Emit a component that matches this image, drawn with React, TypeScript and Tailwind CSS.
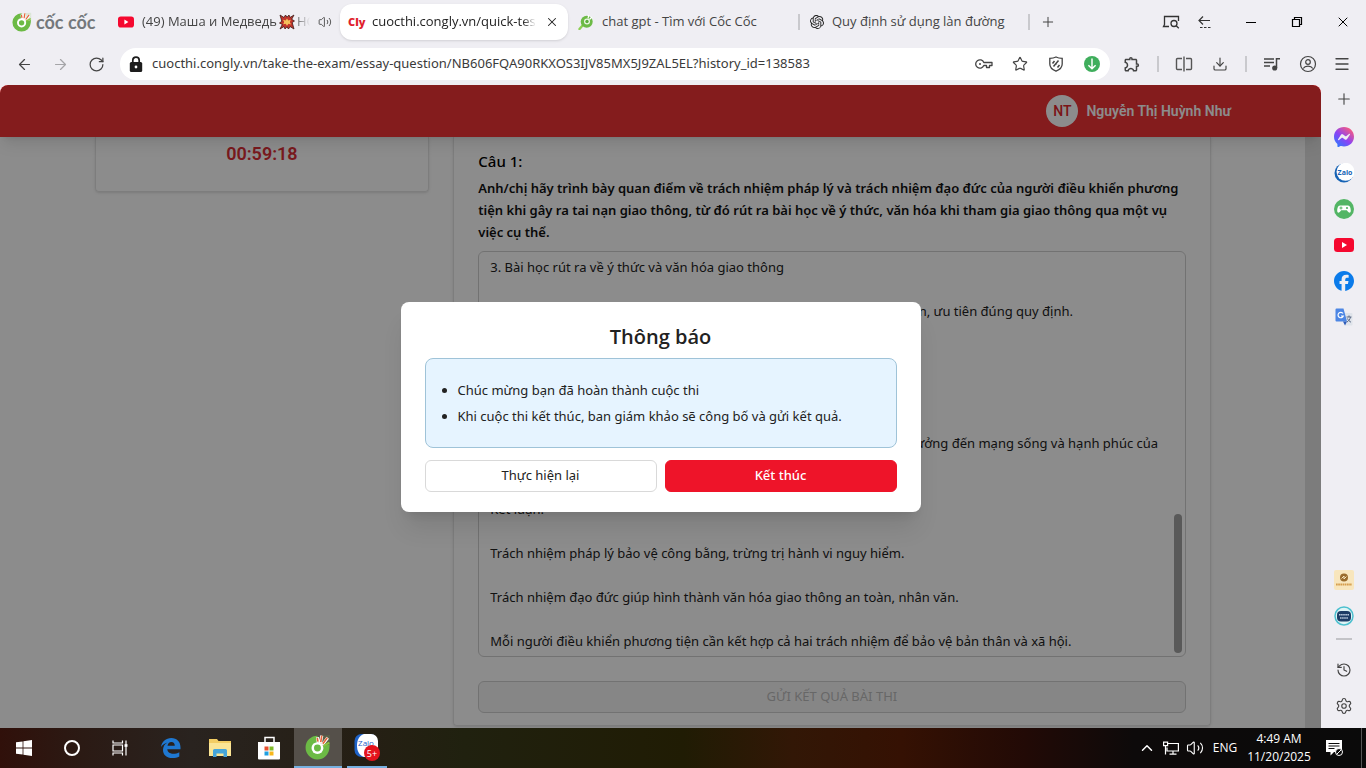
import React from 'react';
import { ArrowLeft, ArrowRight, ChevronUp, Download, History, Menu, Plus, RotateCw, Settings, Star, Volume2, X } from 'lucide-react';
import { MdOutlineExtension } from 'react-icons/md';
import { SiOpenai, SiFacebook, SiMessenger } from 'react-icons/si';

const ANSWER = [
  '3. Bài học rút ra về ý thức và văn hóa giao thông',
  '',
  'Luôn chấp hành tín hiệu đèn, biển báo, chạy đúng tốc độ và đi đúng làn, ưu tiên đúng quy định.',
  '',
  'Không sử dụng rượu bia, điện thoại khi lái xe.',
  '',
  'Biết nhường nhịn, giúp đỡ người gặp nạn.',
  '',
  'Mỗi hành vi nhỏ khi tham gia giao thông đều luôn có thể gây ra ảnh hưởng đến mạng sống và hạnh phúc của',
  'nhiều gia đình.',
  '',
  'Kết luận:',
  '',
  'Trách nhiệm pháp lý bảo vệ công bằng, trừng trị hành vi nguy hiểm.',
  '',
  'Trách nhiệm đạo đức giúp hình thành văn hóa giao thông an toàn, nhân văn.',
  '',
  'Mỗi người điều khiển phương tiện cần kết hợp cả hai trách nhiệm để bảo vệ bản thân và xã hội.',
].join('\n');

interface IconProps {
  className?: string;
}

const CocCocIcon: React.FC<IconProps> = ({ className }) => (
  <svg viewBox="0 0 24 24" className={className} aria-hidden="true">
    <path d="M11.500 1.500A11 11 0 1 0 22.500 13L22.800 9.500 12 12z" fill="#6cba45" />
    <path d="M12 12 12.500 1.500 23 1v9z" fill="#6cba45" fillOpacity=".15" />
    <circle cx="11.500" cy="13" r="5.500" fill="#fff" />
    <circle cx="11.500" cy="13" r="3.200" fill="#6cba45" />
    <path d="M12.300 8 11.500 3M14.200 8.500 15.500 1.500M16 10 21 3.500" stroke="#fff" strokeWidth="2.800" />
    <path d="M12 7 11.300 3.500M14.500 7.500 15.500 1.500M16.500 9 20.500 3.500" stroke="#e4643c" strokeWidth="1.500" />
    <path d="M17 11 22.500 8" stroke="#8ac43f" strokeWidth="1.800" />
  </svg>
);

const CocCocSearchIcon: React.FC<IconProps> = ({ className }) => (
  <svg viewBox="0 0 16 16" className={className} aria-hidden="true">
    <path d="M1.500 15 5 11" stroke="#8ccf52" strokeWidth="2.400" strokeLinecap="round" />
    <circle cx="8.700" cy="7.700" r="6" fill="#6cba45" />
    <circle cx="9" cy="7.500" r="3" fill="#eaf6e2" />
    <circle cx="9" cy="7.500" r="1.700" fill="#5cae3a" />
    <path d="M10 4.500 10.800 1.200M11.500 5.500 14 2.800" stroke="#fff" strokeWidth="1.200" />
  </svg>
);

const YoutubeIcon: React.FC<IconProps> = ({ className }) => (
  <svg viewBox="0 0 20 14" className={className} aria-hidden="true">
    <rect width="20" height="14" rx="3.500" fill="#f5082f" />
    <path d="M8 4v6l5-3z" fill="#fff" />
  </svg>
);

const BoomIcon: React.FC<IconProps> = ({ className }) => (
  <svg viewBox="0 0 16 16" className={className} aria-hidden="true">
    <path
      d="M1 1l4 2.500L6.500 1 8 3.200 10 1l1 2.500L15 1l-2.300 4.300L15.500 7l-2.300 1.500L15 15l-4-2.500L9.500 15 8 12.800 6 15l-1-2.500L1 15l2.300-4.500L.5 9l2.300-1.700z"
      fill="#c3352c"
      stroke="#3c1a16"
      strokeWidth=".8"
    />
    <path d="M8 4.500l1.300 2 2.500-.7-1 2.300 1.200 2.300-2.600-.6L8 11.700l-1.300-2-2.500.6 1-2.300L4 5.800l2.600.7z" fill="#f5c35c" />
  </svg>
);

const LockIcon: React.FC<IconProps> = ({ className }) => (
  <svg viewBox="0 0 14 16" className={className} aria-hidden="true">
    <rect x=".8" y="6" width="12.400" height="10" rx="1.500" fill="#1d1d1d" />
    <path d="M3.800 7V4.300a3.200 3.200 0 0 1 6.400 0V7" fill="none" stroke="#1d1d1d" strokeWidth="1.700" />
    <circle cx="7" cy="11" r="1.400" fill="#fff" />
  </svg>
);

const KeyIcon: React.FC<IconProps> = ({ className }) => (
  <svg viewBox="0 0 18 10" className={className} fill="none" stroke="#444" strokeWidth="1.300" aria-hidden="true">
    <path d="M8.800 3.500A4.200 4.200 0 1 0 8.800 6.500H11.500V8.500H14.500V6.500H17V3.500z" strokeLinejoin="round" />
    <circle cx="5" cy="5" r="1" fill="#444" stroke="none" />
  </svg>
);

const AccountIcon: React.FC<IconProps> = ({ className }) => (
  <svg viewBox="0 0 18 18" className={className} fill="none" stroke="#444" strokeWidth="1.200" aria-hidden="true">
    <circle cx="9" cy="9" r="7.500" />
    <circle cx="9" cy="7" r="2.300" />
    <path d="M4.200 13.500c1-1.700 2.800-2.300 4.800-2.300s3.800.6 4.800 2.300" />
  </svg>
);

const ScreenSearchIcon: React.FC<IconProps> = ({ className }) => (
  <svg viewBox="0 0 18 14" className={className} fill="none" stroke="#333" strokeWidth="1.300" aria-hidden="true">
    <path d="M7 11.500H1.500L2.500 9.500V1.500H16.500V6" />
    <circle cx="12" cy="8.500" r="3" />
    <path d="m14.200 10.700 2.600 2.500" />
  </svg>
);

const BackDashIcon: React.FC<IconProps> = ({ className }) => (
  <svg viewBox="0 0 16 14" className={className} fill="none" stroke="#333" strokeWidth="1.200" aria-hidden="true">
    <path d="M13 5.500H2M6 1.500 2 5.500l4 4" />
    <path d="M3 12.500h12" strokeDasharray="2.500 1.500" />
  </svg>
);

const RestoreIcon: React.FC<IconProps> = ({ className }) => (
  <svg viewBox="0 0 12 12" className={className} fill="none" stroke="#000" strokeWidth="1.200" aria-hidden="true">
    <path d="M1.500 3.500h7v7h-7zM3.500 3.500v-2h7v7h-2" />
  </svg>
);

const ShieldIcon: React.FC<IconProps> = ({ className }) => (
  <svg viewBox="0 0 16 16" className={className} fill="none" stroke="#444" strokeWidth="1.300" aria-hidden="true">
    <path d="M8 1C6 2 4 2.300 1.800 2.300V8c0 3.300 2.700 5.800 6.200 7.200 3.500-1.400 6.200-3.900 6.200-7.200V2.300C12 2.300 10 2 8 1z" />
    <path d="M4.500 7.500 6.500 5M5.500 10.500l5-6M8 7l.5 1.500M9.500 11.500 11.500 9" strokeWidth="1.500" />
  </svg>
);

const SplitIcon: React.FC<IconProps> = ({ className }) => (
  <svg viewBox="0 0 18 16" className={className} fill="none" stroke="#555" strokeWidth="1.400" aria-hidden="true">
    <path d="M7 2.500H2.500a1 1 0 0 0-1 1v9a1 1 0 0 0 1 1H7M11 2.500h4.500a1 1 0 0 1 1 1v9a1 1 0 0 1-1 1H11M9 .5v15" />
  </svg>
);

const PlaylistIcon: React.FC<IconProps> = ({ className }) => (
  <svg viewBox="0 0 18 16" className={className} fill="none" stroke="#444" strokeWidth="1.500" aria-hidden="true">
    <path d="M1 3h10M1 6.500h10M1 10h6M13.500 12V2.800H17" />
    <circle cx="11.700" cy="12" r="1.800" fill="#444" />
  </svg>
);

const ZaloIcon: React.FC<IconProps> = ({ className }) => (
  <svg viewBox="0 0 20 20" className={className} aria-hidden="true">
    <circle cx="10" cy="10" r="9.500" fill="#1763b5" />
    <circle cx="11.500" cy="8.800" r="9" fill="#fff" />
    <text x="11" y="12" textAnchor="middle" fontSize="7" fontWeight="700" fontFamily="Open Sans, sans-serif" fill="#1763b5">
      Zalo
    </text>
  </svg>
);

const GameIcon: React.FC<IconProps> = ({ className }) => (
  <svg viewBox="0 0 20 20" className={className} aria-hidden="true">
    <circle cx="10" cy="10" r="10" fill="#53b565" />
    <path d="M6 6.500h8c2 0 2.800 3 2.800 5.300 0 2.200-1.900 2.400-3 .8l-1-1.300H7.200l-1 1.300c-1.100 1.600-3 1.400-3-.8C3.200 9.500 4 6.500 6 6.500z" fill="#fff" />
    <path d="M7 7.500v3M5.500 9h3" stroke="#53b565" />
    <circle cx="13" cy="9" r="1.100" fill="#53b565" />
  </svg>
);

const TranslateIcon: React.FC<IconProps> = ({ className }) => (
  <svg viewBox="0 0 18 18" className={className} aria-hidden="true">
    <path d="M8 5h8.500a1 1 0 0 1 1 1v10.500a1 1 0 0 1-1 1H10z" fill="#dfe3ea" />
    <path d="M1.500.5h7L12 13.500H1.500a1 1 0 0 1-1-1v-11a1 1 0 0 1 1-1z" fill="#4d86e4" />
    <path d="M8 5.500A2.700 2.700 0 1 0 8.300 8H6" fill="none" stroke="#fff" strokeWidth="1.200" />
    <path d="M11.500 9h5M14 7.500V9M15.500 9c-.5 2.500-2 4-3.500 5M12.500 10.500c.5 1.500 2 3 3.500 3.700" fill="none" stroke="#5c6b86" />
    <path d="m10 17.500 2-4H8z" fill="#2d5bb8" />
  </svg>
);

const GoldBadgeIcon: React.FC<IconProps> = ({ className }) => (
  <svg viewBox="0 0 20 20" className={className} aria-hidden="true">
    <rect width="20" height="20" rx="2" fill="#f8e6bd" />
    <circle cx="10" cy="7.500" r="4" fill="#9a6c2c" />
    <path d="M7.500 8.500 10 6v3l2.500-2.500" fill="none" stroke="#f8e6bd" />
    <path d="M2 14.500h16" stroke="#d59d4c" strokeWidth="2" strokeDasharray="1.700 .5" />
  </svg>
);

const TealBadgeIcon: React.FC<IconProps> = ({ className }) => (
  <svg viewBox="0 0 20 20" className={className} aria-hidden="true">
    <circle cx="10" cy="10" r="9" fill="#dff4f6" stroke="#4cc0cf" strokeWidth="1.500" />
    <rect x="3" y="5" width="14" height="10.500" rx="4" fill="#1d3d66" />
    <path d="M5 8.800h10M6 12h8" stroke="#b9c9dc" strokeWidth="1.600" strokeDasharray="1.600 .5" />
  </svg>
);

const WindowsIcon: React.FC<IconProps> = ({ className }) => (
  <svg viewBox="0 0 16 16" className={className} fill="#fff" aria-hidden="true">
    <path d="M0 2.300 6.600 1.400v6.200H0zM7.400 1.300 16 0v7.600H7.400zM0 8.400h6.600v6.200L0 13.700zM7.400 8.400H16V16l-8.600-1.200z" />
  </svg>
);

const TaskViewIcon: React.FC<IconProps> = ({ className }) => (
  <svg viewBox="0 0 16 16" className={className} fill="none" stroke="#fff" strokeWidth="1.200" aria-hidden="true">
    <path d="M1 .5v2.500h9.500V.5M1 15.500V13h9.500v2.500M1 5h9.500v6H1zM14 .5v15" />
    <path d="M12.500 5.500h3" strokeWidth="2.600" />
  </svg>
);

const EdgeIcon: React.FC<IconProps> = ({ className }) => (
  <svg viewBox="0 0 20 20" className={className} aria-hidden="true">
    <path
      d="M0 9C.8 3.500 5 0 10.300 0 16 0 19.500 4 19.500 9.300v2H6.300c.2 3 2.900 4.500 6 4.500 2.200 0 4.300-.6 6-1.600v4.200c-1.900 1-4.300 1.600-7 1.600C5.600 20 2 16.700 2 11.900c0-3.200 1.600-6 4.600-7.500C3.700 5 1.300 6.700 0 9zm6.500-1.200h7.300c0-2.300-1.200-3.800-3.400-3.800S6.900 5.600 6.500 7.800z"
      fill="#1f78d1"
    />
  </svg>
);

const FolderIcon: React.FC<IconProps> = ({ className }) => (
  <svg viewBox="0 0 22 18" className={className} aria-hidden="true">
    <path d="M0 0h8l1.500 2H22v15H0z" fill="#f3cd63" />
    <path d="M0 4h22v13H0z" fill="#fbe595" />
    <path d="M4 18v-6.500a1.500 1.500 0 0 1 1.500-1.500h11a1.500 1.500 0 0 1 1.500 1.500V18h-3.500v-3.500h-7V18z" fill="#46a5da" />
  </svg>
);

const StoreIcon: React.FC<IconProps> = ({ className }) => (
  <svg viewBox="0 0 22 24" className={className} aria-hidden="true">
    <path d="M7 7V1.500h9V7" fill="none" stroke="#fff" strokeWidth="1.500" />
    <path d="M0 6h22v16.500a1 1 0 0 1-1 1H1a1 1 0 0 1-1-1z" fill="#fff" />
    <path d="M6.500 10.500h4v4h-4z" fill="#e8502f" />
    <path d="M11.500 10.500h4v4h-4z" fill="#7fba28" />
    <path d="M6.500 15.500h4v4h-4z" fill="#219fe0" />
    <path d="M11.500 15.500h4v4h-4z" fill="#f8b71c" />
  </svg>
);

const ZaloAppIcon: React.FC<IconProps> = ({ className }) => (
  <svg viewBox="0 0 26 28" className={className} aria-hidden="true">
    <rect x=".5" y="1" width="23" height="23" rx="7" fill="#1e62c8" />
    <path d="M10 1h7a7 7 0 0 1 7 7v9a7 7 0 0 1-7 7h-7C5 22 3 18 3 12.500S5 3 10 1z" fill="#fff" />
    <text x="12" y="13" textAnchor="middle" fontSize="8" fontFamily="Open Sans, sans-serif" fill="#1e62c8">
      Zalo
    </text>
    <circle cx="18" cy="20" r="8" fill="#e3131d" />
    <text x="18" y="24" textAnchor="middle" fontSize="9" fontFamily="Open Sans, sans-serif" fill="#fff">
      5+
    </text>
  </svg>
);

const NetworkIcon: React.FC<IconProps> = ({ className }) => (
  <svg viewBox="0 0 16 14" className={className} fill="none" stroke="#fff" strokeWidth="1.200" aria-hidden="true">
    <path d="M5 2.500h10.400v7.500H4V6.500M10 10v3M6.500 13.200h7M.6 1.200h4v3.500h-4zM2.500 5v8.500" />
  </svg>
);

const NotificationIcon: React.FC<IconProps> = ({ className }) => (
  <svg viewBox="0 0 17 16" className={className} aria-hidden="true">
    <path d="M0 0h16v12H8l-3.500 3.500V12H0z" fill="#fff" />
    <path d="M2.500 3.500h11M2.500 6h11M2.500 8.500h6" stroke="#0a0a0a" />
    <circle cx="13" cy="12" r="3.500" fill="#0a0a0a" stroke="#fff" />
    <path d="m11 14 4-4" stroke="#fff" />
  </svg>
);

interface IconButtonProps {
  label: string;
  className?: string;
  children: React.ReactNode;
}

const IconButton: React.FC<IconButtonProps> = ({ label, className = 'w-9 h-9', children }) => (
  <button type="button" aria-label={label} className={`flex shrink-0 items-center justify-center ${className}`}>
    {children}
  </button>
);

const Divider = () => <span className="h-4 w-0.5 shrink-0 bg-[#c9c9cd]" />;

const TabBar = () => (
  <div className="flex h-11 shrink-0 items-center font-['Open_Sans',sans-serif] text-[13px] text-[#444]">
    <div className="flex w-[110px] shrink-0 items-center gap-1 pl-3">
      <CocCocIcon className="h-5 w-5" />
      <span className="font-[Lato] text-lg leading-5 font-bold text-[#74787b]">cốc cốc</span>
    </div>
    <div className="flex h-9 w-[230px] items-center gap-2 px-2">
      <YoutubeIcon className="h-3 w-4 shrink-0" />
      <div className="flex w-[172px] items-center gap-0.5 overflow-hidden whitespace-nowrap [mask-image:linear-gradient(to_right,black_90%,transparent)]">
        (49) Маша и Медведь
        <BoomIcon className="h-4 w-4 shrink-0" />
        НО
      </div>
      <Volume2 className="h-3.5 w-3.5 shrink-0" strokeWidth={1.5} />
    </div>
    <div className="flex h-9 w-[228px] items-center gap-2 rounded-xl bg-white px-2 text-[#222] shadow">
      <span className="w-4 shrink-0 text-[11px] font-extrabold text-[#e01f2d]">Cly</span>
      <span className="w-[164px] overflow-hidden whitespace-nowrap [mask-image:linear-gradient(to_right,black_92%,transparent)]">
        cuocthi.congly.vn/quick-test
      </span>
      <IconButton label="Đóng thẻ" className="h-5 w-4">
        <X className="h-3.5 w-3.5" strokeWidth={1.75} />
      </IconButton>
    </div>
    <div className="flex h-9 w-[230px] items-center gap-2 pl-2.5">
      <CocCocSearchIcon className="h-4 w-4 shrink-0" />
      <span className="whitespace-nowrap">chat gpt - Tìm với Cốc Cốc</span>
    </div>
    <Divider />
    <div className="flex h-9 w-[228px] items-center gap-2 pl-2.5">
      <SiOpenai className="h-3.5 w-3.5 shrink-0 text-[#222]" />
      <span className="whitespace-nowrap">Quy định sử dụng làn đường</span>
    </div>
    <Divider />
    <IconButton label="Thẻ mới">
      <Plus className="h-4 w-4" strokeWidth={1.5} />
    </IconButton>
    <div className="ml-auto flex items-center pr-1.5">
      <IconButton label="Tìm trong màn hình" className="h-9 w-[34px]">
        <ScreenSearchIcon className="h-3.5 w-[18px]" />
      </IconButton>
      <IconButton label="Khôi phục thẻ" className="h-9 w-[34px]">
        <BackDashIcon className="h-3.5 w-4" />
      </IconButton>
      <IconButton label="Thu nhỏ" className="h-9 w-[46px] pl-3">
        <span className="h-px w-2.5 bg-black" />
      </IconButton>
      <IconButton label="Khôi phục" className="h-9 w-[46px] pl-3">
        <RestoreIcon className="h-3 w-3" />
      </IconButton>
      <IconButton label="Đóng" className="h-9 w-[46px] pl-3">
        <X className="h-4 w-4 text-black" strokeWidth={1.5} />
      </IconButton>
    </div>
  </div>
);

const Toolbar = () => (
  <div className="flex h-[41px] shrink-0 items-center pb-px pl-1.5 text-[#444]">
    <IconButton label="Quay lại">
      <ArrowLeft className="h-[17px] w-[17px]" strokeWidth={1.75} />
    </IconButton>
    <IconButton label="Tiến">
      <ArrowRight className="h-[17px] w-[17px] text-[#a5a5a8]" strokeWidth={1.75} />
    </IconButton>
    <IconButton label="Tải lại">
      <RotateCw className="h-[17px] w-[17px]" strokeWidth={1.75} />
    </IconButton>
    <div className="ml-1.5 flex h-8 flex-1 items-center rounded-full bg-white pl-2">
      <LockIcon className="h-4 w-4 shrink-0" />
      <input
        aria-label="Địa chỉ trang"
        readOnly
        value="cuocthi.congly.vn/take-the-exam/essay-question/NB606FQA90RKXOS3IJV85MX5J9ZAL5EL?history_id=138583"
        className="ml-2 min-w-0 flex-1 text-[13px] text-[#3a3a3a] outline-none"
      />
      <IconButton label="Mật khẩu">
        <KeyIcon className="h-2.5 w-[18px]" />
      </IconButton>
      <IconButton label="Đánh dấu trang">
        <Star className="h-4 w-4" strokeWidth={1.75} />
      </IconButton>
      <IconButton label="Chặn quảng cáo">
        <ShieldIcon className="h-4 w-4" />
      </IconButton>
      <IconButton label="Tải video">
        <span className="flex h-4 w-4 items-center justify-center rounded-full bg-[#3fae5c]">
          <svg viewBox="0 0 10 10" className="h-3 w-3" fill="none" stroke="#fff" strokeWidth="1.200" aria-hidden="true">
            <path d="M5 .5v8.500M2 6l3 3 3-3" />
          </svg>
        </span>
      </IconButton>
    </div>
    <div className="flex items-center pr-2 pl-1">
      <IconButton label="Tiện ích">
        <MdOutlineExtension className="h-[18px] w-[18px]" />
      </IconButton>
      <span className="mx-[7px] flex">
        <Divider />
      </span>
      <IconButton label="Chia màn hình">
        <SplitIcon className="h-4 w-[18px]" />
      </IconButton>
      <IconButton label="Tải xuống">
        <Download className="h-4 w-4" strokeWidth={1.75} />
      </IconButton>
      <span className="mx-[7px] flex">
        <Divider />
      </span>
      <IconButton label="Danh sách phát">
        <PlaylistIcon className="h-4 w-[18px]" />
      </IconButton>
      <IconButton label="Hồ sơ">
        <AccountIcon className="h-[18px] w-[18px]" />
      </IconButton>
      <IconButton label="Trình đơn" className="h-9 w-8">
        <Menu className="h-[18px] w-[18px]" strokeWidth={1.75} />
      </IconButton>
    </div>
  </div>
);

const Sidebar = () => (
  <aside className="flex w-[45px] shrink-0 flex-col items-center pb-1 text-[#444]">
    <IconButton label="Thêm" className="mb-1.5 h-7 w-9">
      <Plus className="h-[18px] w-[18px]" strokeWidth={1.5} />
    </IconButton>
    <IconButton label="Messenger">
      <svg width="0" height="0" className="absolute" aria-hidden="true">
        <linearGradient id="messenger" x1="0" y1="1" x2=".8" y2="0">
          <stop offset="0" stopColor="#1a84ff" />
          <stop offset=".5" stopColor="#8a43f5" />
          <stop offset="1" stopColor="#ff5c78" />
        </linearGradient>
      </svg>
      <SiMessenger className="h-5 w-5 fill-[url(#messenger)]" />
    </IconButton>
    <IconButton label="Zalo">
      <ZaloIcon className="h-5 w-5" />
    </IconButton>
    <IconButton label="Trò chơi">
      <GameIcon className="h-5 w-5" />
    </IconButton>
    <IconButton label="YouTube">
      <YoutubeIcon className="h-3.5 w-5" />
    </IconButton>
    <IconButton label="Facebook">
      <SiFacebook className="h-5 w-5 text-[#0b7bea]" />
    </IconButton>
    <IconButton label="Dịch">
      <TranslateIcon className="h-[18px] w-[18px]" />
    </IconButton>
    <IconButton label="Trang đã ghim 1" className="mt-auto h-9 w-9">
      <GoldBadgeIcon className="h-5 w-5" />
    </IconButton>
    <IconButton label="Trang đã ghim 2">
      <TealBadgeIcon className="h-5 w-5" />
    </IconButton>
    <span className="mt-1 mb-3 h-0.5 w-4 bg-[#c3c3c7]" />
    <IconButton label="Lịch sử">
      <History className="h-4 w-4" strokeWidth={1.75} />
    </IconButton>
    <IconButton label="Cài đặt">
      <Settings className="h-[18px] w-[18px]" strokeWidth={1.5} />
    </IconButton>
  </aside>
);

const NoticeDialog = () => (
  <div className="absolute inset-0 z-20 flex items-center justify-center overflow-hidden rounded-t-lg bg-black/45">
    <div role="dialog" aria-labelledby="notice-title" className="w-[520px] rounded-lg bg-white px-6 py-5 text-[#222] shadow-xl">
      <h2 id="notice-title" className="text-center font-['Open_Sans',sans-serif] text-xl leading-[30px] font-semibold">
        Thông báo
      </h2>
      <ul className="mt-1.5 list-disc rounded-lg border border-[#9fc3d8] bg-[#e6f4ff] py-[18px] pl-8 text-[13px] leading-[26px]">
        <li>Chúc mừng bạn đã hoàn thành cuộc thi</li>
        <li>Khi cuộc thi kết thúc, ban giám khảo sẽ công bố và gửi kết quả.</li>
      </ul>
      <div className="mt-3 grid grid-cols-2 gap-2 text-[13px]">
        <button type="button" className="h-8 rounded-md border border-[#d9d9d9] bg-white">
          Thực hiện lại
        </button>
        <button type="button" className="h-8 rounded-md border border-[#ee1429] bg-[#ee1429] font-medium text-white">
          Kết thúc
        </button>
      </div>
    </div>
  </div>
);

const ExamPage = () => (
  <main className="relative flex min-w-0 flex-1 flex-col overflow-hidden rounded-t-lg bg-white">
    <header className="z-10 flex h-[52px] shrink-0 items-center justify-end gap-2 bg-[#f03336] pr-[90px] font-[Roboto] shadow-lg">
      <span className="flex h-8 w-8 items-center justify-center rounded-full bg-white text-sm font-medium text-[#e0262c]">
        NT
      </span>
      <span className="text-sm font-semibold text-white">Nguyễn Thị Huỳnh Như</span>
    </header>
    <div className="flex min-h-0 flex-1">
      <div className="min-w-0 flex-1 px-4">
        <div className="mx-auto flex max-w-[1116px] items-start gap-6">
          <section className="w-[30%] rounded-b border border-t-0 border-[#e4e4e4] pt-1 pb-6 text-center shadow">
            <p className="font-[Roboto] text-lg leading-[26px] font-semibold text-[#dc2f36]">00:59:18</p>
          </section>
          <section className="flex-1 rounded-b border border-t-0 border-[#e4e4e4] px-6 pt-[13px] pb-3 shadow">
            <h3 className="text-[15px] leading-[22px] font-medium text-black">Câu 1:</h3>
            <label htmlFor="answer" className="mt-[5px] block text-[13px] leading-[22px] font-semibold text-[#111]">
              Anh/chị hãy trình bày quan điểm về trách nhiệm pháp lý và trách nhiệm đạo đức của người điều khiển phương
              tiện khi gây ra tai nạn giao thông, từ đó rút ra bài học về ý thức, văn hóa khi tham gia giao thông qua
              một vụ việc cụ thể.
            </label>
            <div className="relative mt-2">
              <textarea
                id="answer"
                readOnly
                rows={18}
                value={ANSWER}
                className="block w-full resize-none overflow-hidden rounded-md border border-[#d0d0d0] py-1 pr-4 pl-[11px] text-[13px] leading-[22px] text-[#222]"
              />
              <span className="absolute right-1 bottom-1 h-[139px] w-2 rounded-full bg-[#a3a3a3]" />
            </div>
            <button
              type="button"
              disabled
              className="mt-6 h-8 w-full rounded-md border border-[#d0d0d0] bg-[#f5f5f5] text-[13px] text-[#bcbcbc]"
            >
              GỬI KẾT QUẢ BÀI THI
            </button>
          </section>
        </div>
      </div>
      <span className="w-4 shrink-0 bg-[#e2e2e2]" />
    </div>
    <NoticeDialog />
  </main>
);

const Taskbar = () => (
  <footer className="flex h-10 shrink-0 items-center bg-[linear-gradient(to_right,#30100a,#2b1a14_6%,#29231f_14%,#251f14_27%,#20210f_34%,#201c04_50%,#321706_58%,#351103_66%,#220a06_75%,#0d0a0a_83%,#0a0a0a)] text-white">
    <IconButton label="Bắt đầu" className="h-10 w-12">
      <WindowsIcon className="h-4 w-4" />
    </IconButton>
    <IconButton label="Cortana" className="h-10 w-12">
      <span className="h-4 w-4 rounded-full border-2 border-white" />
    </IconButton>
    <IconButton label="Xem tác vụ" className="h-10 w-12">
      <TaskViewIcon className="h-4 w-4" />
    </IconButton>
    <div className="flex gap-px pl-[3px]">
      <IconButton label="Edge" className="h-10 w-12">
        <EdgeIcon className="h-5 w-5" />
      </IconButton>
      <IconButton label="File Explorer" className="h-10 w-12">
        <FolderIcon className="h-[18px] w-[22px]" />
      </IconButton>
      <IconButton label="Store" className="h-10 w-12">
        <StoreIcon className="h-6 w-[22px]" />
      </IconButton>
      <IconButton label="Cốc Cốc" className="h-10 w-12 border-b-2 border-[#76b0e0] bg-[#55504a]">
        <CocCocIcon className="h-[26px] w-[26px]" />
      </IconButton>
      <IconButton label="Zalo" className="mx-1 h-10 w-10 border-b-2 border-[#76b0e0]">
        <ZaloAppIcon className="h-7 w-[26px]" />
      </IconButton>
    </div>
    <div className="ml-auto flex h-full items-center font-['Open_Sans',sans-serif] text-xs">
      <IconButton label="Biểu tượng ẩn" className="h-10 w-6">
        <ChevronUp className="h-[18px] w-[18px]" strokeWidth={2} />
      </IconButton>
      <IconButton label="Mạng" className="h-10 w-6">
        <NetworkIcon className="h-3.5 w-4" />
      </IconButton>
      <IconButton label="Âm lượng" className="h-10 w-6">
        <Volume2 className="h-[18px] w-[18px]" strokeWidth={1.5} />
      </IconButton>
      <span className="w-9 text-center">ENG</span>
      <div className="w-[72px] text-center leading-[18px]">
        <p>4:49 AM</p>
        <p>11/20/2025</p>
      </div>
      <IconButton label="Thông báo" className="h-10 w-[46px] pr-2">
        <NotificationIcon className="h-4 w-[17px]" />
      </IconButton>
      <span className="mr-1 h-full w-px bg-[#555]" />
    </div>
  </footer>
);

export default function App() {
  return (
    <div className="flex h-screen flex-col overflow-hidden bg-[#efeef3] font-['Noto_Sans','Open_Sans',sans-serif]">
      <TabBar />
      <Toolbar />
      <div className="flex min-h-0 flex-1">
        <ExamPage />
        <Sidebar />
      </div>
      <Taskbar />
    </div>
  );
}
